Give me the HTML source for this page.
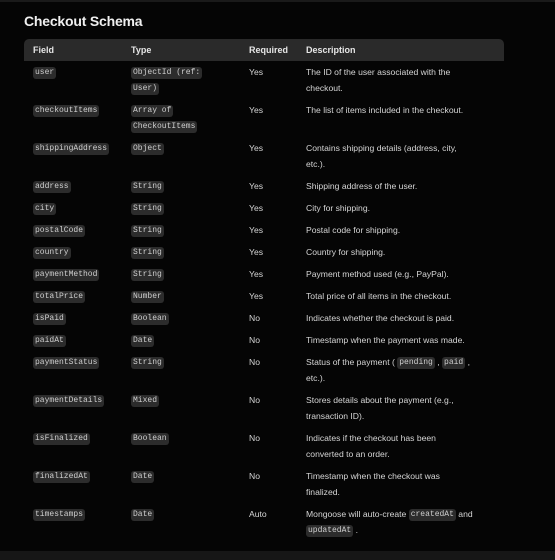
<!DOCTYPE html>
<html><head><meta charset="utf-8"><style>
html,body{margin:0;padding:0;background:#050505;width:555px;height:560px;overflow:hidden}
body{font-family:"Liberation Sans",sans-serif;color:#dcdcdc;position:relative}
.top{position:absolute;left:0;top:0;width:555px;height:2px;background:#1a1a1a}
.bot{position:absolute;left:0;top:551px;width:555px;height:9px;background:#161616}
h1{position:absolute;left:24px;top:13px;margin:0;font-size:14px;font-weight:bold;color:#f0f0f0;letter-spacing:-0.2px}
table{position:absolute;left:24px;top:39px;width:480px;border-collapse:collapse;table-layout:fixed}
th{background:#2a2a2a;height:22px;padding:0 0 0 9px;text-align:left;font-size:9px;font-weight:bold;color:#e6e6e6}
th:first-child{border-top-left-radius:5px}
th:last-child{border-top-right-radius:5px}
td{vertical-align:top;padding:3px 0 3px 9px;font-size:8.6px;line-height:16px;height:16px;color:#d6d6d6}
td div{height:16px;line-height:16px;white-space:nowrap;overflow:visible}
code{display:inline-block;vertical-align:top;margin-top:3px;height:12px;line-height:12px;font-family:"Liberation Mono",monospace;font-size:8px;background:#2c2c2c;border-radius:3px;padding:0 2px;color:#cfcfcf}
</style></head><body>
<div class="top"></div>
<h1>Checkout Schema</h1>
<table>
<colgroup><col style="width:98px"><col style="width:118px"><col style="width:57px"><col></colgroup>
<tr><th>Field</th><th>Type</th><th>Required</th><th>Description</th></tr>
<tr><td><div><code>user</code></div></td><td><div><code>ObjectId (ref:</code></div><div><code>User)</code></div></td><td><div>Yes</div></td><td><div>The ID of the user associated with the</div><div>checkout.</div></td></tr>
<tr><td><div><code>checkoutItems</code></div></td><td><div><code>Array of</code></div><div><code>CheckoutItems</code></div></td><td><div>Yes</div></td><td><div>The list of items included in the checkout.</div></td></tr>
<tr><td><div><code>shippingAddress</code></div></td><td><div><code>Object</code></div></td><td><div>Yes</div></td><td><div>Contains shipping details (address, city,</div><div>etc.).</div></td></tr>
<tr><td><div><code>address</code></div></td><td><div><code>String</code></div></td><td><div>Yes</div></td><td><div>Shipping address of the user.</div></td></tr>
<tr><td><div><code>city</code></div></td><td><div><code>String</code></div></td><td><div>Yes</div></td><td><div>City for shipping.</div></td></tr>
<tr><td><div><code>postalCode</code></div></td><td><div><code>String</code></div></td><td><div>Yes</div></td><td><div>Postal code for shipping.</div></td></tr>
<tr><td><div><code>country</code></div></td><td><div><code>String</code></div></td><td><div>Yes</div></td><td><div>Country for shipping.</div></td></tr>
<tr><td><div><code>paymentMethod</code></div></td><td><div><code>String</code></div></td><td><div>Yes</div></td><td><div>Payment method used (e.g., PayPal).</div></td></tr>
<tr><td><div><code>totalPrice</code></div></td><td><div><code>Number</code></div></td><td><div>Yes</div></td><td><div>Total price of all items in the checkout.</div></td></tr>
<tr><td><div><code>isPaid</code></div></td><td><div><code>Boolean</code></div></td><td><div>No</div></td><td><div>Indicates whether the checkout is paid.</div></td></tr>
<tr><td><div><code>paidAt</code></div></td><td><div><code>Date</code></div></td><td><div>No</div></td><td><div>Timestamp when the payment was made.</div></td></tr>
<tr><td><div><code>paymentStatus</code></div></td><td><div><code>String</code></div></td><td><div>No</div></td><td><div>Status of the payment ( <code>pending</code> , <code>paid</code> ,</div><div>etc.).</div></td></tr>
<tr><td><div><code>paymentDetails</code></div></td><td><div><code>Mixed</code></div></td><td><div>No</div></td><td><div>Stores details about the payment (e.g.,</div><div>transaction ID).</div></td></tr>
<tr><td><div><code>isFinalized</code></div></td><td><div><code>Boolean</code></div></td><td><div>No</div></td><td><div>Indicates if the checkout has been</div><div>converted to an order.</div></td></tr>
<tr><td><div><code>finalizedAt</code></div></td><td><div><code>Date</code></div></td><td><div>No</div></td><td><div>Timestamp when the checkout was</div><div>finalized.</div></td></tr>
<tr><td><div><code>timestamps</code></div></td><td><div><code>Date</code></div></td><td><div>Auto</div></td><td><div>Mongoose will auto-create <code>createdAt</code> and</div><div><code>updatedAt</code> .</div></td></tr>
</table>
<div class="bot"></div>
</body></html>
